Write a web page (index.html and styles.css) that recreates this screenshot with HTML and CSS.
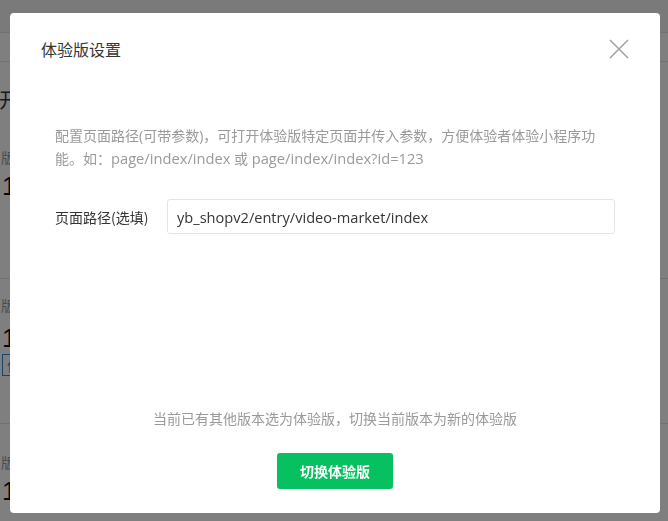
FILE: index.html
```html
<!DOCTYPE html>
<html lang="zh-CN">
  <head>
    <meta charset="UTF-8">
    <meta name="viewport" content="width=device-width, initial-scale=1.0">
    <title>体验版设置</title>
    <link rel="stylesheet" href="styles.css">
  </head>
  <body>
    <div class="page">
      <div class="page-top"></div>
      <div class="page-tabs"></div>
      <div class="page-title">开发版本</div>
      <div class="ver-row ver-row-1">
        <div class="ver-label">版本号</div>
        <div class="ver-num">1.0.0</div>
      </div>
      <div class="ver-row ver-row-2">
        <div class="ver-label">版本号</div>
        <div class="ver-num">1.0.1</div>
        <span class="ver-tag">体验版</span>
      </div>
      <div class="ver-row ver-row-3">
        <div class="ver-label">版本号</div>
        <div class="ver-num">1.0.2</div>
      </div>
    </div>

    <div class="mask">
      <div class="dialog">
        <div class="dialog-head">
          <h3 class="dialog-title">体验版设置</h3>
          <button class="dialog-close" aria-label="关闭">
            <svg width="20" height="20" viewBox="0 0 20 20">
              <path d="M1 1 L19 19 M19 1 L1 19" stroke="#a3a3a3" stroke-width="1.6" fill="none"/>
            </svg>
          </button>
        </div>
        <div class="dialog-body">
          <p class="tips">配置页面路径(可带参数)，可打开体验版特定页面并传入参数，方便体验者体验小程序功能。如：<span class="eg">page/index/index</span> 或 <span class="eg">page/index/index?id=123</span></p>
          <div class="form-row">
            <label class="form-label" for="path">页面路径(选填)</label>
            <input class="form-input" id="path" type="text" value="yb_shopv2/entry/video-market/index">
          </div>
        </div>
        <div class="dialog-foot">
          <p class="foot-tips">当前已有其他版本选为体验版，切换当前版本为新的体验版</p>
          <button class="btn-primary">切换体验版</button>
        </div>
      </div>
    </div>
  </body>
</html>
```

FILE: styles.css
```css
body {
  margin: 0;
  font-family: "Noto Sans CJK SC", "Liberation Sans", sans-serif;
  color: #353535;
  background: #fff;
  overflow: hidden;
}
.page {
  height: 521px;
}
.page-top {
  height: 32px;
  background: #f4f4f4;
  border-bottom: 1px solid #e4e4e4;
}
.page-tabs {
  height: 28px;
  border-bottom: 1px solid #e4e4e4;
}
.page-title {
  font-size: 20px;
  margin: 26px 0 0 -1px;
  line-height: 24px;
}
.ver-row {
  border-bottom: 1px solid #e4e4e4;
  box-sizing: border-box;
}
.ver-row-1 {
  height: 167px;
  padding-top: 35px;
}
.ver-row-2 {
  height: 145px;
  padding-top: 16px;
}
.ver-row-3 {
  height: 98px;
  padding-top: 28px;
  border-bottom: 0;
}
.ver-label {
  font-size: 14px;
  color: #999;
  line-height: 20px;
  margin-left: 1px;
}
.ver-num {
  font-family: "Liberation Sans", sans-serif;
  font-size: 26px;
  line-height: 28px;
  margin-top: 5px;
  margin-left: 2px;
  color: #111;
}
.ver-row-2 .ver-num {
  margin-top: 9px;
}
.ver-tag {
  display: inline-block;
  margin-left: 2px;
  border: 1px solid #2b8de0;
  color: #2b8de0;
  font-size: 14px;
  padding: 0 4px;
  line-height: 20px;
}

.mask {
  position: fixed;
  top: 0;
  left: 0;
  right: 0;
  bottom: 0;
  background: rgba(0, 0, 0, 0.5);
  padding: 13px 0 0 10px;
}
.dialog {
  width: 650px;
  height: 500px;
  background: #fff;
  border-radius: 4px;
  display: flex;
  flex-direction: column;
  box-sizing: border-box;
}
.dialog-head {
  display: flex;
  justify-content: space-between;
  align-items: center;
  padding: 25px 31px 0 31px;
  height: 22px;
}
.dialog-title {
  margin: 0;
  font-size: 16px;
  font-weight: normal;
  line-height: 22px;
  color: #353535;
}
.dialog-close {
  border: 0;
  background: none;
  padding: 0;
  width: 20px;
  height: 20px;
}
.dialog-close svg {
  display: block;
}
.dialog-body {
  padding: 0 45px;
}
.tips {
  margin: 64px 0 0 0;
  font-family: "Open Sans", "Noto Sans CJK SC", sans-serif;
  font-size: 14px;
  line-height: 23px;
  color: #9a9a9a;
}
.tips .eg {
  font-size: 14.7px;
}
.form-row {
  display: flex;
  align-items: center;
  margin-top: 29px;
}
.form-label {
  width: 112px;
  font-size: 14px;
  color: #353535;
}
.form-input {
  flex: 1;
  height: 35px;
  box-sizing: border-box;
  border: 1px solid #e5e5e5;
  border-radius: 3px;
  padding: 0 9px;
  font-family: "Open Sans", "Noto Sans CJK SC", sans-serif;
  font-size: 14.6px;
  color: #353535;
  outline: none;
}
.dialog-foot {
  margin-top: auto;
  padding-bottom: 24px;
  text-align: center;
}
.foot-tips {
  margin: 0 0 25px 0;
  font-size: 14px;
  line-height: 20px;
  color: #9a9a9a;
}
.btn-primary {
  width: 116px;
  height: 36px;
  border: 0;
  border-radius: 3px;
  background: #07c160;
  color: #fff;
  font-family: "Noto Sans CJK SC", sans-serif;
  font-size: 14px;
  font-weight: bold;
}
```
